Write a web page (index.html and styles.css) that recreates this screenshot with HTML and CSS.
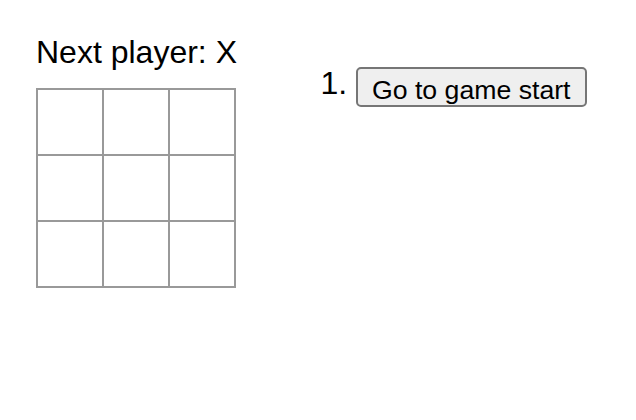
FILE: index.html
```html
<!DOCTYPE html>
<html>
<head>
<meta charset="utf-8">
<link rel="stylesheet" href="styles.css">
</head>
<body>
<div class="game">
  <div class="game-board">
    <div class="status">Next player: X</div>
    <div class="board">
      <button class="square"></button><button class="square"></button><button class="square"></button>
      <button class="square"></button><button class="square"></button><button class="square"></button>
      <button class="square"></button><button class="square"></button><button class="square"></button>
    </div>
  </div>
  <div class="game-info">
    <ol class="moves">
      <li class="move-item"><button class="move">Go to game start</button></li>
    </ol>
  </div>
</div>
</body>
</html>
```

FILE: styles.css
```css
* { box-sizing: border-box; }
body {
  margin: 0;
  padding: 36px;
  font-family: "Liberation Sans", Arial, sans-serif;
  font-size: 32px;
  color: #000;
  background: #fff;
}
.game {
  display: flex;
  flex-direction: row;
  align-items: flex-start;
}
.status {
  font-size: 32px;
  line-height: 32px;
  margin-bottom: 20px;
}
.board {
  display: grid;
  grid-template-columns: repeat(3, 66px);
  grid-auto-rows: 66px;
  width: 200px;
  border-top: 2px solid #999;
  border-left: 2px solid #999;
}
.square {
  background: #fff;
  border: 0;
  border-right: 2px solid #999;
  border-bottom: 2px solid #999;
  margin: 0;
  padding: 0;
  width: 66px;
  height: 66px;
}
.game-info {
  margin-left: 40px;
}
.moves {
  margin: 31px 0 0 0;
  padding-left: 79px;
}
.move-item {
  line-height: 32px;
}
.move {
  font-family: "Liberation Sans", Arial, sans-serif;
  font-size: 26.67px;
  line-height: 30px;
  height: 40px;
  padding: 6px 14px 0 14px;
  border: 2px solid #767676;
  border-radius: 5px;
  background: #efefef;
  color: #000;
  vertical-align: top;
}
```
